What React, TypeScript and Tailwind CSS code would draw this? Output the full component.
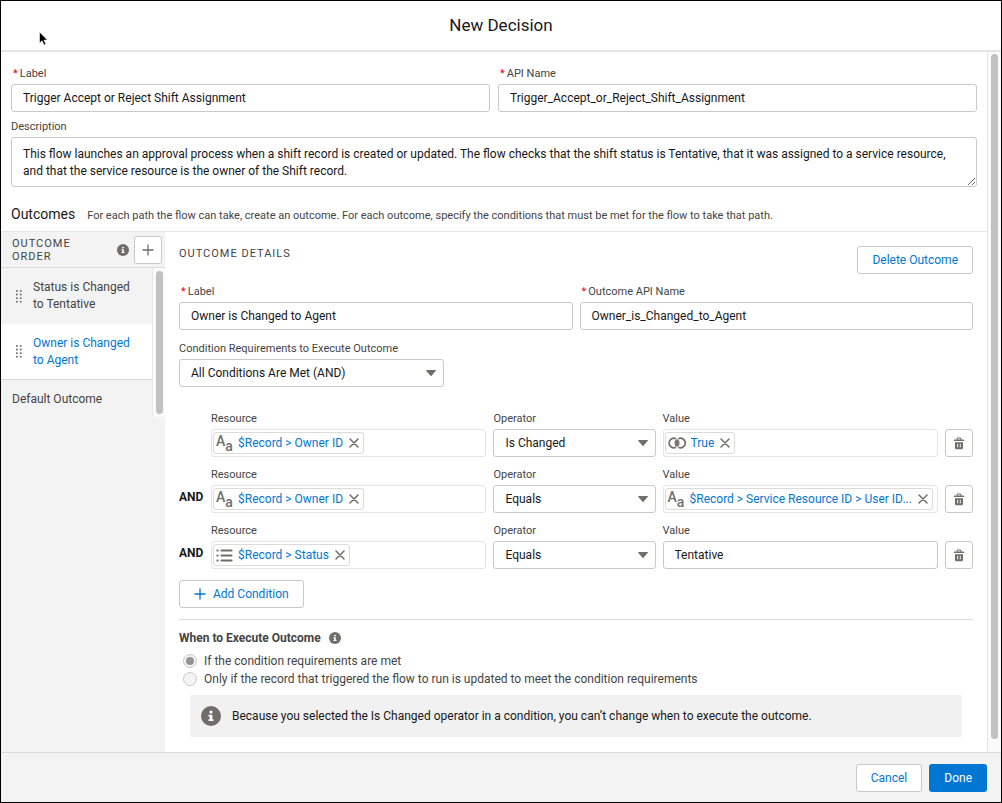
import { useState } from "react";
import type { ReactNode } from "react";

type Resource = {
  icon: "text" | "boolean" | "picklist";
  label: string;
};

type Condition = {
  id: string;
  resource: Resource;
  operator: string;
  value: Resource | string;
};

const conditions: Condition[] = [
  {
    id: "condition-1",
    resource: { icon: "text", label: "$Record > Owner ID" },
    operator: "Is Changed",
    value: { icon: "boolean", label: "True" },
  },
  {
    id: "condition-2",
    resource: { icon: "text", label: "$Record > Owner ID" },
    operator: "Equals",
    value: { icon: "text", label: "$Record > Service Resource ID > User ID..." },
  },
  {
    id: "condition-3",
    resource: { icon: "picklist", label: "$Record > Status" },
    operator: "Equals",
    value: "Tentative",
  },
];

const operators = ["Equals", "Does Not Equal", "Is Changed", "Is Null"];

const inputClass =
  "h-7 w-full min-w-0 rounded-[3px] border border-[#c9c9c9] bg-white px-[11px] text-[12px] text-[#181818] outline-none";

const InfoIcon = ({ className }: { className: string }) => (
  <svg viewBox="0 0 24 24" className={className} aria-hidden="true">
    <circle cx="12" cy="12" r="12" fill="#706e6b" />
    <circle cx="12" cy="7.2" r="1.9" fill="#fff" />
    <path d="M9 10.5h4.6v5.3H15V18H9v-2.2h1.4v-3.1H9z" fill="#fff" />
  </svg>
);

const PlusIcon = ({ className }: { className: string }) => (
  <svg viewBox="0 0 12 12" className={className} fill="none" stroke="currentColor" strokeWidth="1.3" strokeLinecap="round" aria-hidden="true">
    <path d="M6 1v10M1 6h10" />
  </svg>
);

const TrashIcon = () => (
  <svg viewBox="0 0 12 13" className="h-[13px] w-3" aria-hidden="true">
    <path d="M4.2 2.8V1.7c0-.4.3-.7.7-.7h2.2c.4 0 .7.3.7.7v1.1" fill="none" stroke="#706e6b" strokeWidth="1.1" />
    <path d="M1.4 2.6h9.2c.3 0 .5.2.5.5v.9H.9v-.9c0-.3.2-.5.5-.5z" fill="#706e6b" />
    <path d="M2 5.2h8V11c0 .7-.5 1.2-1.2 1.2H3.2C2.5 12.2 2 11.7 2 11z" fill="#706e6b" />
    <path d="M4.7 6.8v3.6M7.3 6.8v3.6" stroke="#fff" strokeWidth="0.9" />
  </svg>
);

const GripIcon = () => (
  <svg viewBox="0 0 6 13" className="h-[13px] w-1.5 shrink-0" fill="#706e6b" aria-hidden="true">
    {[0, 3.6, 7.2, 10.8].map((y) => (
      <g key={y}>
        <rect x="0" y={y} width="1.8" height="1.8" rx="0.6" />
        <rect x="3.8" y={y} width="1.8" height="1.8" rx="0.6" />
      </g>
    ))}
  </svg>
);

const ResourceIcon = ({ icon }: { icon: Resource["icon"] }) => {
  if (icon === "text") {
    return (
      <span className="flex h-[17px] w-[17px] shrink-0 text-[#706e6b]" aria-hidden="true">
        <span className="self-start text-[14px] leading-[12px] font-medium">A</span>
        <span className="self-end text-[14px] leading-[12px] font-medium">a</span>
      </span>
    );
  }

  if (icon === "boolean") {
    return (
      <svg viewBox="0 0 18 12" className="h-3 w-[18px] shrink-0" fill="none" stroke="#706e6b" aria-hidden="true">
        <path d="M9 2.4a4.9 4.9 0 0 1 0 7.2a4.9 4.9 0 0 1 0-7.2z" fill="#706e6b" stroke="none" />
        <path d="M8 1.7A4.8 4.8 0 1 0 8 10.3" strokeWidth="1.7" />
        <path d="M10.4 1.7A4.8 4.8 0 1 1 10.4 10.3" strokeWidth="1.7" />
        <path d="M9.4 2.3A5 5 0 0 1 9.4 9.7M8.6 2.3A5 5 0 0 0 8.6 9.7" strokeWidth="1.1" />
      </svg>
    );
  }

  return (
    <svg viewBox="0 0 17 13" className="h-[13px] w-[17px] shrink-0" fill="#706e6b" aria-hidden="true">
      {[0.5, 5.5, 10.5].map((y) => (
        <g key={y}>
          <rect x="0.5" y={y} width="2" height="2" rx="0.5" />
          <rect x="4.5" y={y} width="12" height="2" rx="0.8" />
        </g>
      ))}
    </svg>
  );
};

const FieldLabel = ({ htmlFor, required, children }: { htmlFor: string; required?: boolean; children: ReactNode }) => (
  <label htmlFor={htmlFor} className="flex h-[19px] items-center text-[11px] text-[#444444]">
    {required ? <span className="mr-0.5 ml-0.5 text-[#ea001e]">*</span> : null}
    {children}
  </label>
);

const TextField = ({ id, label, defaultValue }: { id: string; label: string; defaultValue: string }) => (
  <div className="min-w-0 flex-1">
    <FieldLabel htmlFor={id} required>
      {label}
    </FieldLabel>
    <input id={id} type="text" defaultValue={defaultValue} className={inputClass} />
  </div>
);

const SelectField = ({ id, label, value, options }: { id: string; label: string; value: string; options: string[] }) => (
  <div className="min-w-0">
    <FieldLabel htmlFor={id}>{label}</FieldLabel>
    <div className="relative">
      <select id={id} defaultValue={value} className={`${inputClass} appearance-none`}>
        {options.map((option) => (
          <option key={option}>{option}</option>
        ))}
      </select>
      <svg viewBox="0 0 10 6" className="pointer-events-none absolute top-[11px] right-2 h-1.5 w-2.5" aria-hidden="true">
        <path d="M.8 0h8.4c.6 0 .8.5.4 1L5.500 5.700c-.3.300-.7.300-1 0L.4 1C0 .5.2 0 .8 0z" fill="#706e6b" />
      </svg>
    </div>
  </div>
);

const ResourceField = ({ id, label, resource }: { id: string; label: string; resource: Resource }) => (
  <div className="min-w-0">
    <FieldLabel htmlFor={id}>{label}</FieldLabel>
    <div className="flex h-7 items-center rounded-[3px] border border-[#e5e5e5] bg-white px-px">
      <div className="flex h-[22px] min-w-0 items-center rounded-[3px] border border-[#dddbda] pr-1 pl-0.5">
        <ResourceIcon icon={resource.icon} />
        <button id={id} type="button" className="ml-[5px] truncate text-[12px] text-[#0176d3]">
          {resource.label}
        </button>
        <button type="button" aria-label={`Remove ${resource.label}`} className="ml-1.5 shrink-0 text-[#706e6b]">
          <svg viewBox="0 0 10 10" className="block size-2.5" stroke="currentColor" strokeWidth="1.5" strokeLinecap="round">
            <path d="M1 1l8 8M9 1l-8 8" />
          </svg>
        </button>
      </div>
    </div>
  </div>
);

const ConditionRow = ({ condition, first }: { condition: Condition; first: boolean }) => (
  <div className="flex items-end">
    <span className="h-6 w-8 shrink-0 text-[12px] leading-4 font-bold text-[#181818]">{first ? "" : "AND"}</span>
    <div className="grid min-w-0 flex-1 grid-cols-[17fr_10fr_17fr_28px] items-end gap-[7px]">
      <ResourceField id={`${condition.id}-resource`} label="Resource" resource={condition.resource} />
      <SelectField id={`${condition.id}-operator`} label="Operator" value={condition.operator} options={operators} />
      {typeof condition.value === "string" ? (
        <div className="min-w-0">
          <FieldLabel htmlFor={`${condition.id}-value`}>Value</FieldLabel>
          <input id={`${condition.id}-value`} type="text" defaultValue={condition.value} className={inputClass} />
        </div>
      ) : (
        <ResourceField id={`${condition.id}-value`} label="Value" resource={condition.value} />
      )}
      <button
        type="button"
        aria-label="Delete condition"
        className="flex size-7 items-center justify-center rounded-[3px] border border-[#c9c9c9] bg-white"
      >
        <TrashIcon />
      </button>
    </div>
  </div>
);

const OutcomeSidebar = () => {
  const [selected, setSelected] = useState("Owner is Changed to Agent");
  const outcomes = ["Status is Changed to Tentative", "Owner is Changed to Agent"];

  return (
    <aside className="w-[164px] shrink-0 bg-[#f3f3f3] text-[12px] text-[#444444]">
      <div className="flex h-9 items-center border-b border-[#dddbda] pr-[3px] pl-[11px]">
        <h3 className="w-20 text-[11px] leading-[13px] tracking-[1px] uppercase">Outcome Order</h3>
        <InfoIcon className="ml-auto size-3" />
        <button
          type="button"
          aria-label="Add outcome"
          className="ml-[5px] flex size-7 items-center justify-center rounded-[3px] border border-[#c9c9c9] bg-white text-[#706e6b]"
        >
          <PlusIcon className="size-3" />
        </button>
      </div>
      <div className="flex">
        <div className="min-w-0 flex-1">
          {outcomes.map((outcome) => (
            <button
              key={outcome}
              type="button"
              onClick={() => setSelected(outcome)}
              className={
                outcome === selected
                  ? "flex h-14 w-full items-center gap-[11px] border-b border-[#dddbda] bg-white pr-4 pl-[15px] text-left leading-[17px] text-[#0176d3]"
                  : "flex h-14 w-full items-center gap-[11px] pr-4 pl-[15px] text-left leading-[17px]"
              }
            >
              <GripIcon />
              <span>{outcome}</span>
            </button>
          ))}
          <button type="button" className="flex h-[37px] w-full items-center pl-[11px] text-left">
            Default Outcome
          </button>
        </div>
        <div className="flex w-[13px] justify-center border-l border-[#e8e8e8] bg-[#fafafa] py-[3px]">
          <div className="w-[7px] rounded-full bg-[#c1c1c1]" />
        </div>
      </div>
    </aside>
  );
};

const OutcomeDetails = () => (
  <section className="min-w-0 flex-1 px-3.5 py-3.5">
    <div className="flex h-7 justify-between">
      <h3 className="text-[11px] leading-4 tracking-[1px] text-[#444444] uppercase">Outcome Details</h3>
      <button
        type="button"
        className="h-7 rounded-[3px] border border-[#c9c9c9] bg-white px-3.5 text-[12px] text-[#0176d3]"
      >
        Delete Outcome
      </button>
    </div>

    <div className="mt-[9px] flex gap-[7px]">
      <TextField id="outcome-label" label="Label" defaultValue="Owner is Changed to Agent" />
      <TextField id="outcome-api-name" label="Outcome API Name" defaultValue="Owner_is_Changed_to_Agent" />
    </div>

    <div className="mt-[10px] w-1/3">
      <SelectField
        id="condition-requirements"
        label="Condition Requirements to Execute Outcome"
        value="All Conditions Are Met (AND)"
        options={["All Conditions Are Met (AND)", "Any Condition Is Met (OR)", "Custom Condition Logic Is Met"]}
      />
    </div>

    <div className="mt-[23px] flex flex-col gap-[9px]">
      {conditions.map((condition, index) => (
        <ConditionRow key={condition.id} condition={condition} first={index === 0} />
      ))}
    </div>

    <button
      type="button"
      className="mt-[11px] flex h-7 items-center gap-[7px] rounded-[3px] border border-[#c9c9c9] bg-white px-3.5 text-[12px] text-[#0176d3]"
    >
      <PlusIcon className="size-3" />
      Add Condition
    </button>

    <fieldset className="mt-[11px] border-t border-[#dddbda] pt-[10px] text-[12px] text-[#444444]">
      <div className="mb-1.5 flex h-4 items-center gap-2">
        <span className="text-[12px] font-bold">When to Execute Outcome</span>
        <InfoIcon className="size-3" />
      </div>
      {["If the condition requirements are met", "Only if the record that triggered the flow to run is updated to meet the condition requirements"].map(
        (option, index) => (
          <label key={option} className="flex h-[18px] items-center gap-[7px] pl-1">
            <input
              type="radio"
              name="when-to-execute"
              disabled
              defaultChecked={index === 0}
              className="grid size-3.5 shrink-0 appearance-none place-content-center rounded-full border border-[#c9c9c9] bg-[#f3f3f3] checked:before:size-2 checked:before:rounded-full checked:before:bg-[#939393]"
            />
            {option}
          </label>
        )
      )}
    </fieldset>

    <div className="mx-[11px] mt-[7px] flex h-[42px] items-center gap-[11px] bg-[#f1f1f1] px-[11px] text-[12px] text-[#181818]">
      <InfoIcon className="size-5 shrink-0" />
      <p>Because you selected the Is Changed operator in a condition, you can’t change when to execute the outcome.</p>
    </div>
  </section>
);

const App = () => {
  return (
    <div className="relative flex min-h-screen flex-col border border-black bg-white font-['Roboto','Inter',sans-serif] text-[#181818]">
      <header className="flex h-[51px] items-center justify-center border-b-2 border-[#e5e5e5]">
        <h1 className="text-[17px]">New Decision</h1>
      </header>

      <main className="flex flex-1">
        <div className="flex min-w-0 flex-1 flex-col">
          <div className="px-[10px] pt-[13px]">
            <div className="flex gap-2">
              <TextField id="label" label="Label" defaultValue="Trigger Accept or Reject Shift Assignment" />
              <TextField id="api-name" label="API Name" defaultValue="Trigger_Accept_or_Reject_Shift_Assignment" />
            </div>
            <div className="mt-1.5">
              <FieldLabel htmlFor="description">Description</FieldLabel>
              <textarea
                id="description"
                rows={2}
                defaultValue="This flow launches an approval process when a shift record is created or updated. The flow checks that the shift status is Tentative, that it was assigned to a service resource, and that the service resource is the owner of the Shift record."
                className="block h-[50px] w-full resize-y rounded-[3px] border border-[#c9c9c9] px-[11px] py-2 text-[12px] leading-[17px] outline-none"
              />
            </div>
            <div className="mt-[15px] mb-[5px] flex h-6 items-baseline gap-3 leading-6">
              <h2 className="text-[14px]">Outcomes</h2>
              <p className="text-[11px] text-[#444444]">
                For each path the flow can take, create an outcome. For each outcome, specify the conditions that must be met for the flow
                to take that path.
              </p>
            </div>
          </div>

          <div className="flex flex-1 border-t border-[#e5e5e5]">
            <OutcomeSidebar />
            <OutcomeDetails />
          </div>
        </div>
        <div className="flex w-3.5 shrink-0 justify-center border-l border-[#e5e5e5] bg-[#fafafa] pt-0.5 pb-[13px]">
          <div className="w-[7px] rounded-full bg-[#c1c1c1]" />
        </div>
      </main>

      <footer className="flex h-[50px] items-center justify-end gap-[7px] border-t border-[#dddbda] bg-[#f3f3f3] px-3.5 text-[12px]">
        <button type="button" className="h-7 rounded-[3px] border border-[#c9c9c9] bg-white px-3.5 text-[#0176d3]">
          Cancel
        </button>
        <button type="button" className="h-7 rounded-[3px] bg-[#0176d3] px-[15px] text-white">
          Done
        </button>
      </footer>

      <svg viewBox="0 0 10 15" className="pointer-events-none absolute top-[30px] left-[37px] h-[15px] w-2.5" aria-hidden="true">
        <path d="M1.5 1v11.2l2.6-2.4 1.900 4.300 1.900-.8-1.900-4.200h3.500z" fill="#000" stroke="#fff" strokeWidth="0.6" />
      </svg>
    </div>
  );
};

export default App;
